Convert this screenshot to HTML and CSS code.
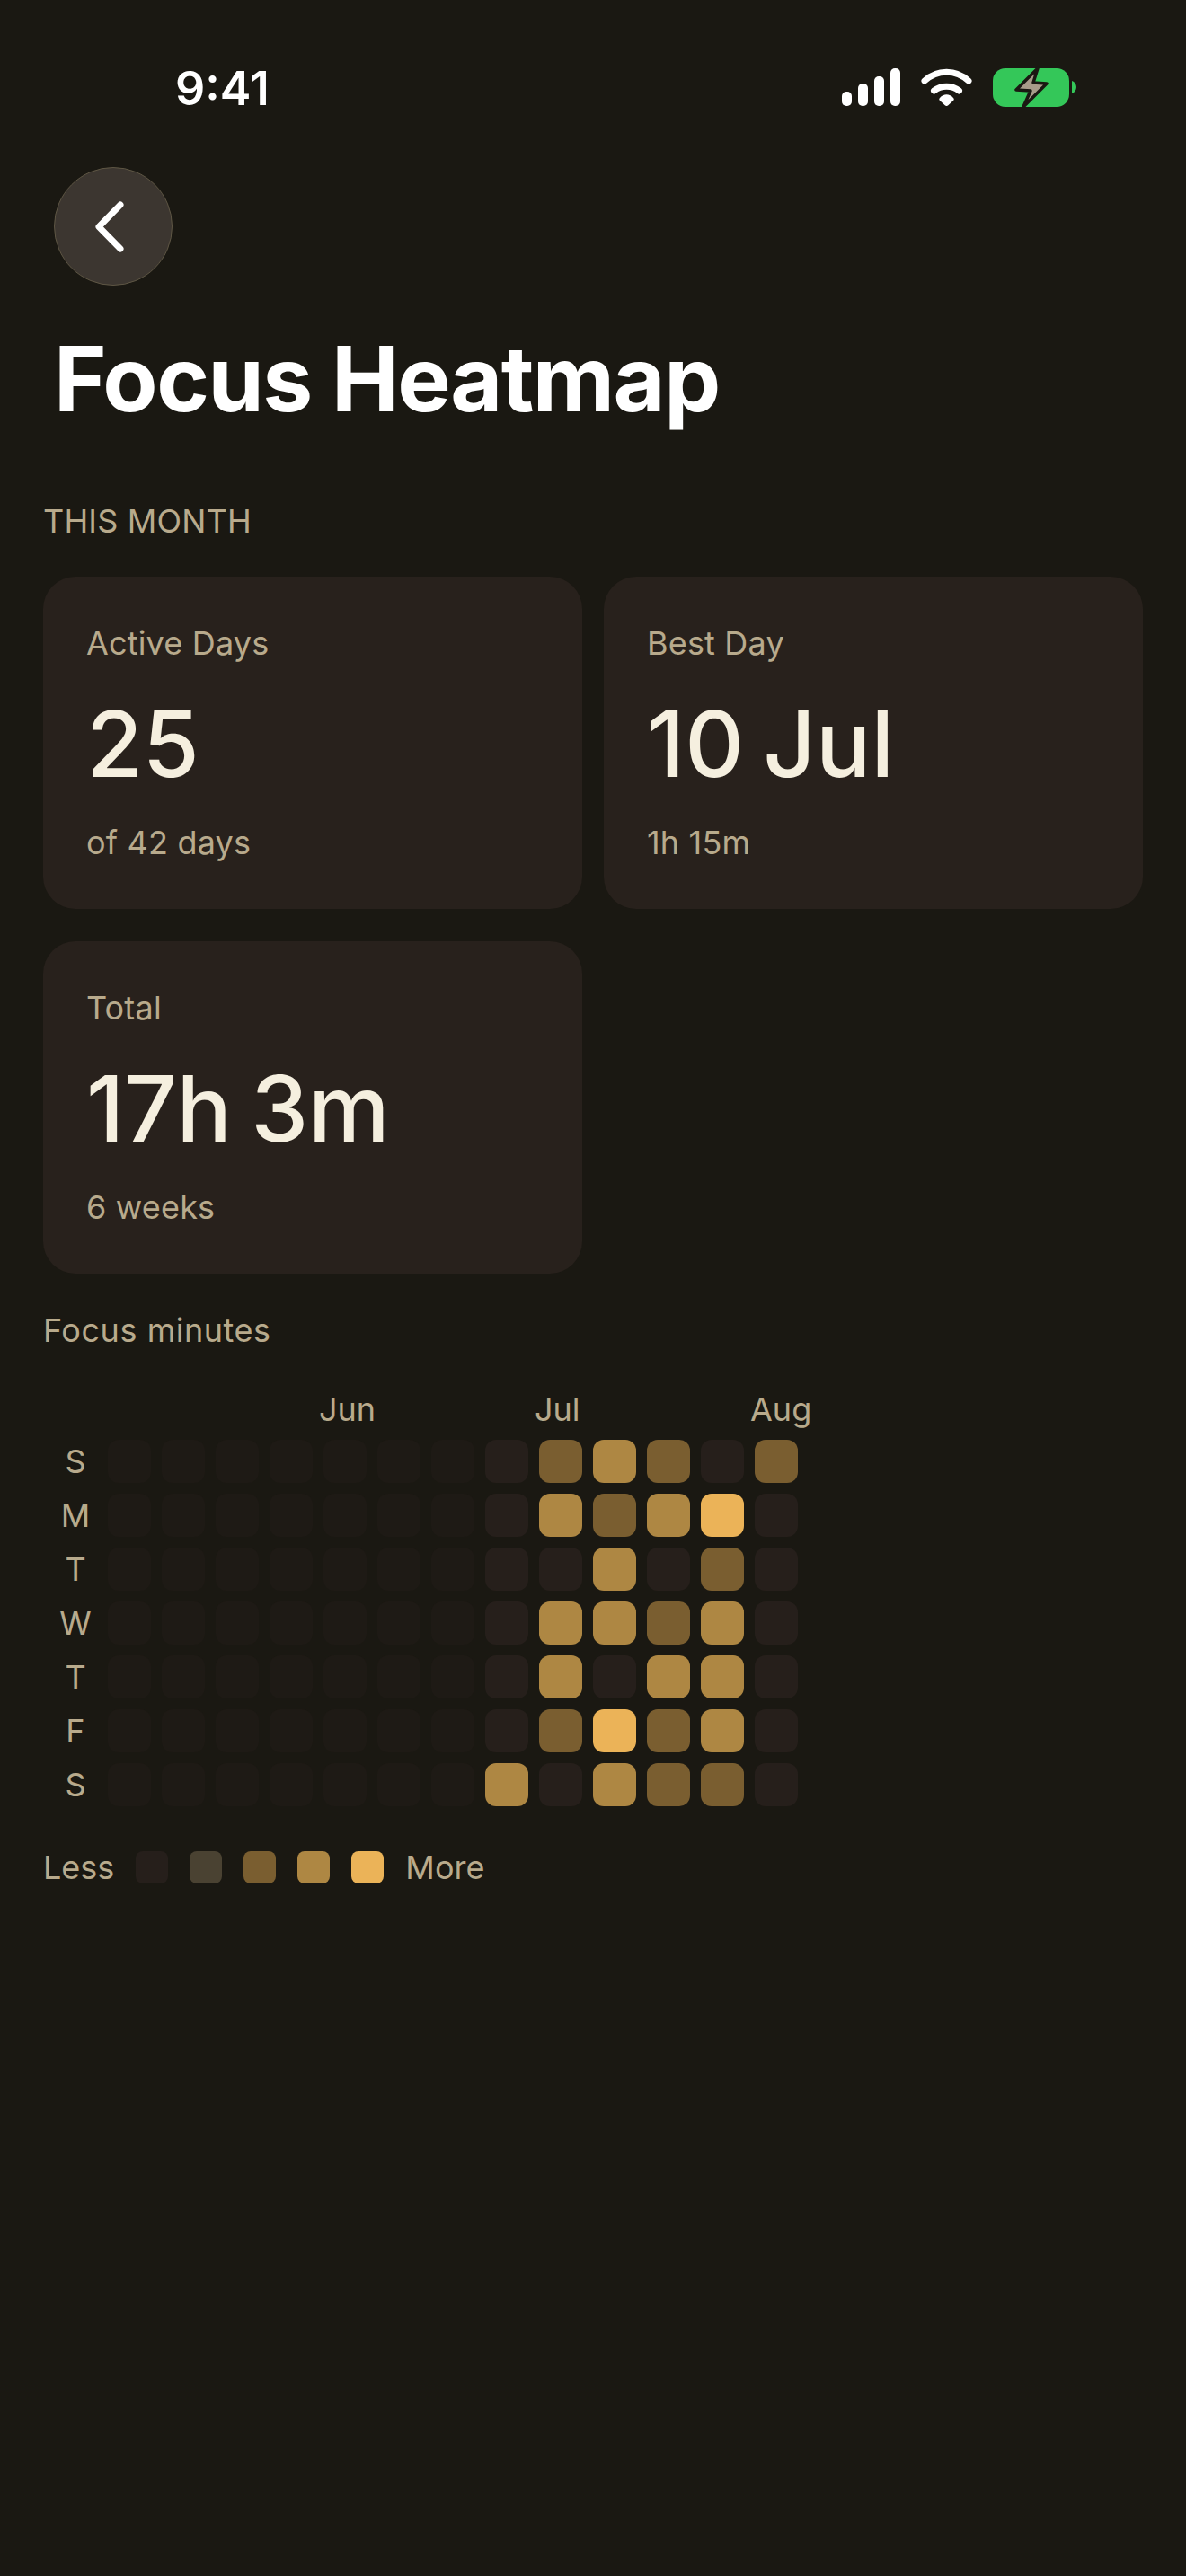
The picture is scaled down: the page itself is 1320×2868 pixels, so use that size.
FILE: index.html
```html
<!DOCTYPE html>
<html lang="en">
  <head>
    <meta charset="utf-8" />
    <meta name="viewport" content="width=device-width, initial-scale=1" />
    <title>Focus Heatmap</title>
    <link rel="stylesheet" href="styles.css">
  </head>

  <body>
    <div class="status-bar">
      <span class="time">9:41</span>
      <div class="status-icons">
        <svg width="65" height="42" viewBox="0 0 65 42" fill="#fff">
          <rect x="0" y="26" width="11" height="16" rx="5" />
          <rect x="18" y="17" width="11" height="25" rx="5" />
          <rect x="36" y="9" width="11" height="33" rx="5" />
          <rect x="54" y="0" width="11" height="42" rx="5" />
        </svg>
        <svg width="57" height="42" viewBox="0 0 57 42">
          <path d="M4 14 C18 1 39 1 53 14" fill="none" stroke="#fff" stroke-width="7" stroke-linecap="round" />
          <path d="M14.5 25 C22 18.5 35 18.5 42.5 25" fill="none" stroke="#fff" stroke-width="7" stroke-linecap="round" />
          <path d="M21 33 C25 28 32 28 36 33 C37 34 37 35 36 36 L30 41.5 C29 42.2 28 42.2 27 41.5 L21 36 C20 35 20 34 21 33 Z" fill="#fff" />
        </svg>
        <svg class="battery" width="93" height="46" viewBox="0 0 93 46">
          <rect x="0" y="2" width="85" height="43" rx="14" fill="#34c759" />
          <path d="M88 16 C91 17 93 20 93 23 C93 26 91 29 88 30 Z" fill="#34c759" />
          <path d="M50 2 L26 26 L42 27 L34 45 L60 19 L45 18 Z" fill="#a89c8a" stroke="#1a1812" stroke-width="3.5" stroke-linejoin="round" />
        </svg>
      </div>
    </div>

    <button class="back-btn">
      <svg width="33" height="57" viewBox="0 0 33 57">
        <path d="M29 4 L5 28.5 L29 53" fill="none" stroke="#fff" stroke-width="7" stroke-linecap="round" stroke-linejoin="round" />
      </svg>
    </button>

    <h1>Focus Heatmap</h1>

    <section class="content">
      <h2 class="section-label">THIS MONTH</h2>

      <div class="stats">
        <div class="stat-card">
          <div class="stat-label">Active Days</div>
          <div class="stat-value">25</div>
          <div class="stat-note">of 42 days</div>
        </div>
        <div class="stat-card">
          <div class="stat-label">Best Day</div>
          <div class="stat-value">10 Jul</div>
          <div class="stat-note">1h 15m</div>
        </div>
        <div class="stat-card">
          <div class="stat-label">Total</div>
          <div class="stat-value">17h 3m</div>
          <div class="stat-note">6 weeks</div>
        </div>
      </div>

      <div class="heat-title">Focus minutes</div>

      <div class="months">
        <span class="month month-jun">Jun</span>
        <span class="month month-jul">Jul</span>
        <span class="month month-aug">Aug</span>
      </div>

      <div class="heatmap">
        <span class="day">S</span>
        <i class="cell"></i><i class="cell"></i><i class="cell"></i><i class="cell"></i><i class="cell"></i><i class="cell"></i><i class="cell"></i>
        <i class="cell l0"></i><i class="cell l2"></i><i class="cell l3"></i><i class="cell l2"></i><i class="cell l0"></i><i class="cell l2"></i>

        <span class="day">M</span>
        <i class="cell"></i><i class="cell"></i><i class="cell"></i><i class="cell"></i><i class="cell"></i><i class="cell"></i><i class="cell"></i>
        <i class="cell l0"></i><i class="cell l3"></i><i class="cell l2"></i><i class="cell l3"></i><i class="cell l4"></i><i class="cell l0"></i>

        <span class="day">T</span>
        <i class="cell"></i><i class="cell"></i><i class="cell"></i><i class="cell"></i><i class="cell"></i><i class="cell"></i><i class="cell"></i>
        <i class="cell l0"></i><i class="cell l0"></i><i class="cell l3"></i><i class="cell l0"></i><i class="cell l2"></i><i class="cell l0"></i>

        <span class="day">W</span>
        <i class="cell"></i><i class="cell"></i><i class="cell"></i><i class="cell"></i><i class="cell"></i><i class="cell"></i><i class="cell"></i>
        <i class="cell l0"></i><i class="cell l3"></i><i class="cell l3"></i><i class="cell l2"></i><i class="cell l3"></i><i class="cell l0"></i>

        <span class="day">T</span>
        <i class="cell"></i><i class="cell"></i><i class="cell"></i><i class="cell"></i><i class="cell"></i><i class="cell"></i><i class="cell"></i>
        <i class="cell l0"></i><i class="cell l3"></i><i class="cell l0"></i><i class="cell l3"></i><i class="cell l3"></i><i class="cell l0"></i>

        <span class="day">F</span>
        <i class="cell"></i><i class="cell"></i><i class="cell"></i><i class="cell"></i><i class="cell"></i><i class="cell"></i><i class="cell"></i>
        <i class="cell l0"></i><i class="cell l2"></i><i class="cell l4"></i><i class="cell l2"></i><i class="cell l3"></i><i class="cell l0"></i>

        <span class="day">S</span>
        <i class="cell"></i><i class="cell"></i><i class="cell"></i><i class="cell"></i><i class="cell"></i><i class="cell"></i><i class="cell"></i>
        <i class="cell l3"></i><i class="cell l0"></i><i class="cell l3"></i><i class="cell l2"></i><i class="cell l2"></i><i class="cell l0"></i>
      </div>

      <div class="legend">
        <span>Less</span>
        <i class="swatch l0"></i>
        <i class="swatch l1"></i>
        <i class="swatch l2"></i>
        <i class="swatch l3"></i>
        <i class="swatch l4"></i>
        <span>More</span>
      </div>
    </section>
  </body>
</html>
```

FILE: styles.css
```css
html {
  font-family: Inter, "Liberation Sans", sans-serif;
  font-size: 36px;
}

body {
  margin: 0;
  min-height: 100vh;
  background-color: #1a1812;
  color: #b8aa8c;
}

.status-bar {
  display: flex;
  justify-content: space-between;
  align-items: center;
  box-sizing: border-box;
  height: 186px;
  padding: 8px 122px 0 195px;
}

.time {
  margin-top: 2px;
  font-size: 52px;
  font-weight: 600;
  color: #fff;
}

.status-icons {
  display: flex;
  align-items: center;
  gap: 23px;
}

.back-btn {
  display: flex;
  align-items: center;
  justify-content: center;
  box-sizing: border-box;
  width: 132px;
  height: 132px;
  margin-left: 60px;
  padding: 0 10px 0 0;
  border: 1px solid #5e5644;
  border-radius: 50%;
  background-color: #3c3630;
}

h1 {
  margin: 42px 0 0 60px;
  font-size: 100px;
  line-height: 124px;
  font-weight: 700;
  letter-spacing: -0.015em;
  color: #fff;
}

.content {
  padding: 0 48px;
}

.section-label {
  margin: 74px 0 0;
  font-size: 36px;
  line-height: 44px;
  font-weight: 400;
  letter-spacing: 0.005em;
}

.stats {
  display: grid;
  grid-template-columns: 600px 600px;
  column-gap: 24px;
  row-gap: 36px;
  margin-top: 40px;
}

.stat-card {
  box-sizing: border-box;
  height: 370px;
  padding: 52px 48px 0;
  border-radius: 36px;
  background-color: #28211c;
}

.stat-label,
.stat-note {
  line-height: 44px;
  letter-spacing: 0.005em;
}

.stat-value {
  margin-top: 28px;
  font-size: 102px;
  line-height: 124px;
  font-weight: 550;
  word-spacing: -6px;
  color: #f5efdf;
}

.stat-note {
  margin-top: 26px;
}

.heat-title {
  margin-top: 41px;
  line-height: 44px;
  letter-spacing: 0.015em;
}

.months {
  display: grid;
  grid-template-columns: 60px repeat(13, 48px);
  column-gap: 12px;
  margin-top: 44px;
  line-height: 44px;
}

.month {
  grid-row: 1;
  margin-left: -5px;
  white-space: nowrap;
}

.month-jun {
  grid-column: 6;
}

.month-jul {
  grid-column: 10;
}

.month-aug {
  grid-column: 14;
}

.heatmap {
  display: grid;
  grid-template-columns: 60px repeat(13, 48px);
  grid-auto-rows: 48px;
  gap: 12px;
  margin-top: 12px;
}

.day {
  padding-left: 12px;
  text-align: center;
  line-height: 48px;
}

.cell {
  border-radius: 12px;
  background-color: #1e1a15;
}

.l0 {
  background-color: #261f1b;
}

.l1 {
  background-color: #4a4232;
}

.l2 {
  background-color: #7a5e30;
}

.l3 {
  background-color: #ae8743;
}

.l4 {
  background-color: #ebb358;
}

.legend {
  display: flex;
  align-items: center;
  gap: 24px;
  margin-top: 46px;
  line-height: 44px;
}

.swatch {
  width: 36px;
  height: 36px;
  border-radius: 8px;
}
```
